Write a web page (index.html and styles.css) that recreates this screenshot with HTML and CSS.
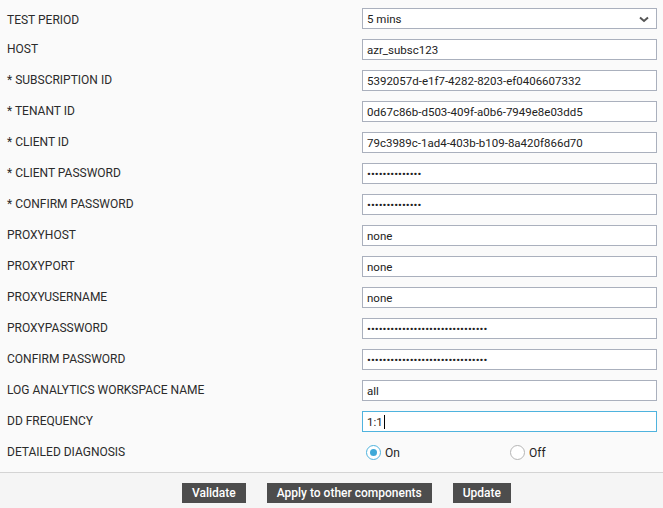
FILE: index.html
```html
<!DOCTYPE html>
<html lang="en">
<head>
    <meta charset="UTF-8">
    <meta name="viewport" content="width=device-width, initial-scale=1.0">
    <title>Component Configuration</title>
    <link rel="stylesheet" href="styles.css">
</head>
<body>
    <div class="config">
        <div class="fields">
            <div class="row row-first">
                <label class="label">TEST PERIOD</label>
                <div class="field select-wrap">
                    <select class="select">
                        <option>5 mins</option>
                    </select>
                    <svg class="chevron" width="10" height="7" viewBox="0 0 10 7">
                        <path d="M1 1.5 L5 5 L9 1.5" fill="none" stroke="#555" stroke-width="2"/>
                    </svg>
                </div>
            </div>
            <div class="row">
                <label class="label">HOST</label>
                <input class="field input" type="text" value="azr_subsc123">
            </div>
            <div class="row">
                <label class="label">* SUBSCRIPTION ID</label>
                <input class="field input" type="text" value="5392057d-e1f7-4282-8203-ef0406607332">
            </div>
            <div class="row">
                <label class="label">* TENANT ID</label>
                <input class="field input" type="text" value="0d67c86b-d503-409f-a0b6-7949e8e03dd5">
            </div>
            <div class="row">
                <label class="label">* CLIENT ID</label>
                <input class="field input" type="text" value="79c3989c-1ad4-403b-b109-8a420f866d70">
            </div>
            <div class="row">
                <label class="label">* CLIENT PASSWORD</label>
                <input class="field input" type="password" value="abcdefghijklmn">
            </div>
            <div class="row">
                <label class="label">* CONFIRM PASSWORD</label>
                <input class="field input" type="password" value="abcdefghijklmn">
            </div>
            <div class="row">
                <label class="label">PROXYHOST</label>
                <input class="field input" type="text" value="none">
            </div>
            <div class="row">
                <label class="label">PROXYPORT</label>
                <input class="field input" type="text" value="none">
            </div>
            <div class="row">
                <label class="label">PROXYUSERNAME</label>
                <input class="field input" type="text" value="none">
            </div>
            <div class="row">
                <label class="label">PROXYPASSWORD</label>
                <input class="field input" type="password" value="abcdefghijklmnopqrstuvwxyzabcde">
            </div>
            <div class="row">
                <label class="label">CONFIRM PASSWORD</label>
                <input class="field input" type="password" value="abcdefghijklmnopqrstuvwxyzabcde">
            </div>
            <div class="row">
                <label class="label">LOG ANALYTICS WORKSPACE NAME</label>
                <input class="field input" type="text" value="all">
            </div>
            <div class="row">
                <label class="label">DD FREQUENCY</label>
                <div class="field input focused">1:1<span class="caret"></span></div>
            </div>
            <div class="row">
                <label class="label">DETAILED DIAGNOSIS</label>
                <div class="field radios">
                    <span class="radio-option">
                        <span class="radio checked"></span>On
                    </span>
                    <span class="radio-option">
                        <span class="radio"></span>Off
                    </span>
                </div>
            </div>
        </div>
        <div class="actions">
            <button class="btn">Validate</button>
            <button class="btn">Apply to other components</button>
            <button class="btn">Update</button>
        </div>
    </div>
</body>
</html>
```

FILE: styles.css
```css
body {
    margin: 0;
    padding: 0;
    background: #fafafa;
    font-family: Roboto, "Liberation Sans", sans-serif;
    font-size: 12px;
    color: #222;
}

.config {
    width: 663px;
    height: 508px;
    display: flex;
    flex-direction: column;
}

.fields {
    padding: 3px 6px 4px 7px;
}

.row {
    display: flex;
    align-items: center;
    justify-content: space-between;
    height: 31px;
}

.label {
    color: #2b2b2b;
    padding-bottom: 2px;
}

.row-first .label {
    padding-top: 2px;
    padding-bottom: 0;
}

.field {
    box-sizing: border-box;
    width: 295px;
    height: 21px;
}

.input {
    display: flex;
    align-items: center;
    border: 1px solid #aab0bd;
    background: #fff;
    padding: 0 4px;
    font-family: inherit;
    font-size: 11.5px;
    color: #222;
    outline: none;
}

.input.focused {
    border-color: #4fb3de;
}

.caret {
    display: inline-block;
    width: 1px;
    height: 14px;
    margin-left: 1px;
    background: #000;
}

.select-wrap {
    position: relative;
}

.select {
    appearance: none;
    -webkit-appearance: none;
    box-sizing: border-box;
    width: 100%;
    height: 100%;
    border: 1px solid #aab0bd;
    border-radius: 0;
    background: #fff;
    padding: 0 4px;
    font-family: inherit;
    font-size: 11.5px;
    color: #222;
    outline: none;
}

.chevron {
    position: absolute;
    right: 8px;
    top: 8px;
}

.radios {
    display: flex;
    align-items: center;
    padding-left: 4px;
}

.radio-option {
    display: flex;
    align-items: center;
    width: 144px;
    color: #222;
}

.radio {
    box-sizing: border-box;
    width: 15px;
    height: 15px;
    margin-right: 4px;
    border: 1px solid #b5b5b5;
    border-radius: 50%;
    background: #fff;
    position: relative;
}

.radio.checked {
    border-color: #4fb3de;
}

.radio.checked::after {
    content: "";
    position: absolute;
    left: 3px;
    top: 3px;
    width: 7px;
    height: 7px;
    border-radius: 50%;
    background: #3ea9d8;
}

.actions {
    flex: 1;
    display: flex;
    justify-content: center;
    align-items: flex-start;
    gap: 21px;
    padding-top: 10px;
    padding-left: 30px;
    border-top: 1px solid #d4d4d4;
    background: #f5f5f5;
}

.btn {
    height: 20px;
    padding: 0 10px;
    border: none;
    border-radius: 0;
    background: #4d4d4d;
    color: #fff;
    font-family: inherit;
    font-size: 12px;
    font-weight: 500;
    cursor: pointer;
}
```
